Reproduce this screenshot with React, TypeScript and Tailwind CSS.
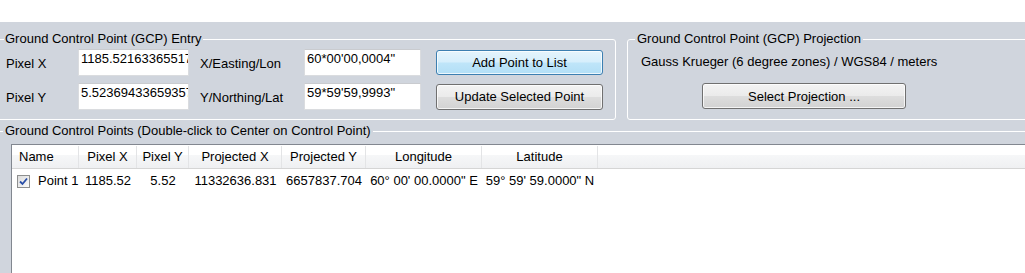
import React from "react";

const COLUMNS = [
  { key: "name", label: "Name", width: "w-[67px]" },
  { key: "px", label: "Pixel X", width: "w-[58px]" },
  { key: "py", label: "Pixel Y", width: "w-[52px]" },
  { key: "prx", label: "Projected X", width: "w-[93px]" },
  { key: "pry", label: "Projected Y", width: "w-[84px]" },
  { key: "lon", label: "Longitude", width: "w-[116px]" },
  { key: "lat", label: "Latitude", width: "w-[116px]" },
];

const ROW = {
  px: "1185.52",
  py: "5.52",
  prx: "11332636.831",
  pry: "6657837.704",
  lon: "60° 00' 00.0000\" E",
  lat: "59° 59' 59.0000\" N",
};

function TextBox({ value, width }: { value: string; width: string }) {
  return (
    <div
      className={`${width} h-[27px] overflow-hidden whitespace-nowrap border border-[#dadcdf] border-t-[#c9cbcf] bg-white pl-[2px] pt-[1px] leading-[15px]`}
    >
      {value}
    </div>
  );
}

function Button({ children, primary, className }: { children: React.ReactNode; primary?: boolean; className?: string }) {
  return (
    <button
      type="button"
      className={`${className ?? ""} flex items-center justify-center rounded-[3px] border leading-[15px] shadow-[inset_0_0_0_1px_rgba(255,255,255,0.75)] ${
        primary
          ? "border-[#3c7fb1] bg-[linear-gradient(#e5f4fc_0%,#d6effc_48%,#bfe5f9_52%,#b2dff6_100%)]"
          : "border-[#707070] bg-[linear-gradient(#f3f3f3_0%,#ebebeb_48%,#dddddd_52%,#d2d2d2_100%)]"
      }`}
    >
      {children}
    </button>
  );
}

function CheckBox() {
  return (
    <div className="flex h-[13px] w-[13px] items-center justify-center border border-[#8e8f8f] bg-[linear-gradient(135deg,#dcdcdc,#fbfbfb)]">
      <svg width="9" height="9" viewBox="0 0 9 9">
        <path d="M1 4.5 L3.5 7 L8 1.5" fill="none" stroke="#2a4fa8" strokeWidth="1.8" />
      </svg>
    </div>
  );
}

export default function App() {
  return (
    <div className="h-[273px] w-[1025px] overflow-hidden bg-[#d0d5dd] font-['Liberation_Sans',Arial,sans-serif] text-[13px] text-black">
      <div className="h-[22px] bg-white" />

      <div className="mt-[10px] flex">
        <fieldset className="-ml-[3px] h-[88px] w-[619px] shrink-0 rounded-[3px] border border-white px-0">
          <legend className="ml-[6px] px-[1px] leading-[14px]">Ground Control Point (GCP) Entry</legend>
          <div className="flex flex-col gap-[7px] pt-[3px]">
            <div className="flex items-center">
              <span className="ml-[8px] w-[72px] pt-[2px]">Pixel X</span>
              <TextBox value="1185.5216336551743" width="w-[111px]" />
              <span className="ml-[11px] w-[104px] pt-[2px]">X/Easting/Lon</span>
              <TextBox value={"60*00'00,0004\""} width="w-[117px]" />
              <Button primary className="ml-[15px] h-[25px] w-[167px]">
                Add Point to List
              </Button>
            </div>
            <div className="flex items-center">
              <span className="ml-[8px] w-[72px] pt-[2px]">Pixel Y</span>
              <TextBox value="5.5236943365935793" width="w-[111px]" />
              <span className="ml-[11px] w-[104px] pt-[2px]">Y/Northing/Lat</span>
              <TextBox value={"59*59'59,9993\""} width="w-[117px]" />
              <Button className="ml-[15px] h-[26px] w-[167px]">Update Selected Point</Button>
            </div>
          </div>
        </fieldset>

        <fieldset className="ml-[11px] h-[88px] w-[420px] shrink-0 rounded-[3px] border border-white px-0">
          <legend className="ml-[7px] px-[2px] leading-[14px]">Ground Control Point (GCP) Projection</legend>
          <div className="flex flex-col items-start pl-[13px] pt-[8px]">
            <span className="leading-[15px]">Gauss Krueger (6 degree zones) / WGS84 / meters</span>
            <Button className="ml-[61px] mt-[14px] h-[26px] w-[204px]">Select Projection ...</Button>
          </div>
        </fieldset>
      </div>

      <fieldset className="-ml-[3px] mt-[4px] h-[200px] w-[1040px] rounded-[3px] border border-white px-0">
        <legend className="ml-[5px] px-[2px] leading-[14px]">
          Ground Control Points (Double-click to Center on Control Point)
        </legend>
        <div className="ml-[13px] mt-[6px] h-[160px] border-l border-t border-[#828790] bg-white pt-[1px]">
          <div className="flex h-[23px] border-b border-[#d5d5d5] bg-[linear-gradient(#ffffff_0%,#ffffff_40%,#f6f7f8_40%,#eff0f2_100%)]">
            {COLUMNS.map((col) => (
              <div
                key={col.key}
                className={`${col.width} flex shrink-0 items-center whitespace-nowrap border-r border-[#e3e4e6] ${
                  col.key === "name" ? "pl-[7px]" : "justify-center"
                }`}
              >
                {col.label}
              </div>
            ))}
          </div>
          <div className="mt-[1px] flex h-[22px] items-center">
            <div className="flex w-[67px] shrink-0 items-center pl-[5px]">
              <CheckBox />
              <span className="ml-[8px] whitespace-nowrap">Point 1</span>
            </div>
            {COLUMNS.slice(1).map((col) => (
              <div key={col.key} className={`${col.width} shrink-0 whitespace-nowrap text-center`}>
                {ROW[col.key as keyof typeof ROW]}
              </div>
            ))}
          </div>
        </div>
      </fieldset>
    </div>
  );
}
